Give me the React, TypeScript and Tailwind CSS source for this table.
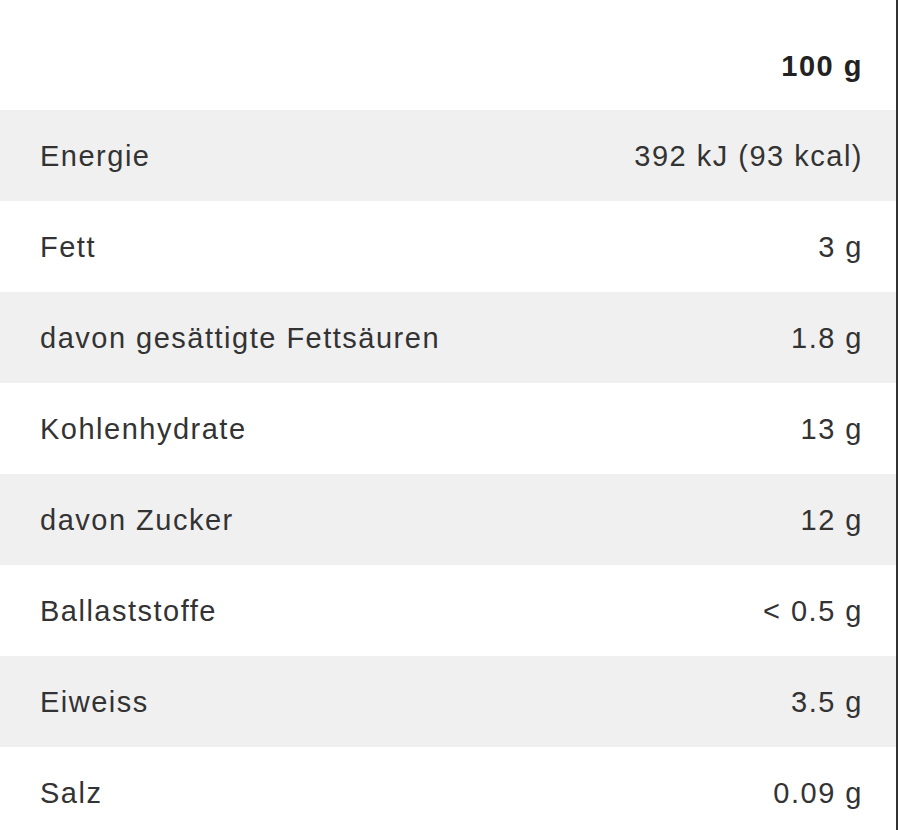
const rows: [string, string][] = [
  ["Energie", "392 kJ (93 kcal)"],
  ["Fett", "3 g"],
  ["davon gesättigte Fettsäuren", "1.8 g"],
  ["Kohlenhydrate", "13 g"],
  ["davon Zucker", "12 g"],
  ["Ballaststoffe", "< 0.5 g"],
  ["Eiweiss", "3.5 g"],
  ["Salz", "0.09 g"],
];

export default function App() {
  return (
    <div className="h-[830px] w-[900px] overflow-hidden bg-white font-['Liberation_Sans',Arial,sans-serif] text-[29px] tracking-[1.5px] text-[#333]">
      <div className="w-[898px] border-r-2 border-[#333] pt-[20px]">
        <div className="flex h-[90px] items-center justify-end pt-[3px] pr-[33px] font-bold text-[#222]">100 g</div>
        {rows.map(([label, value], i) => (
          <div
            key={label}
            className={`flex h-[91px] items-center justify-between pt-[3px] pl-[40px] pr-[33px] ${i % 2 === 0 ? "bg-[#f0f0f0]" : "bg-white"}`}
          >
            <span>{label}</span>
            <span>{value}</span>
          </div>
        ))}
      </div>
    </div>
  );
}
